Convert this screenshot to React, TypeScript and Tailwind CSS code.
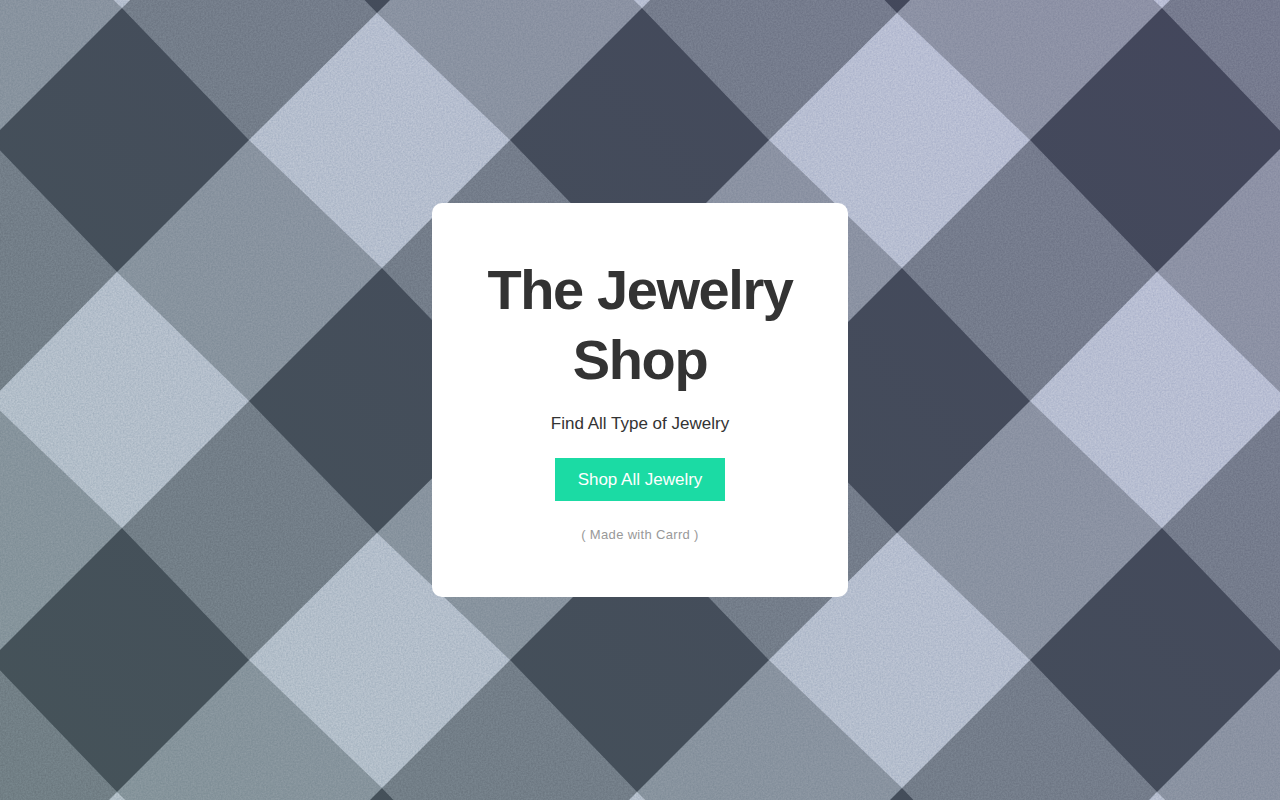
import React from 'react';

type Tone = {
  id: string;
  from: string;
  to: string;
};

// Each tone runs from the bottom left corner to the top right one
const tones: Tone[] = [
  { id: 'mid', from: '#84949a', to: '#8e91a7' },
  { id: 'shade', from: '#717f85', to: '#767a8f' },
  { id: 'dark', from: '#455359', to: '#43465c' },
  { id: 'light', from: '#b0bec6', to: '#babed7' },
];

// Diamonds of one 520px tile, the tile starts at the left tip of a dark one
const shapes: Record<string, string[]> = {
  shade: [
    '132,8 259,140 387,13 259,-120',
    '132,528 259,660 387,533 259,400',
    '0,140 127,272 0,401 -128,268',
    '520,140 647,272 520,401 392,268',
  ],
  dark: [
    '132,8 259,140 127,272 0,140',
    '132,528 259,660 127,792 0,660',
    '392,268 520,401 387,533 259,401',
    '392,-252 520,-119 387,13 259,-119',
  ],
  light: [
    '387,13 520,140 392,268 259,140',
    '127,272 259,401 132,528 0,401',
    '387,533 520,660 392,788 259,660',
    '127,-248 259,-119 132,8 0,-119',
  ],
};

const Background = () => {
  return (
    <svg
      className="absolute inset-0 h-full w-full"
      aria-hidden="true"
      preserveAspectRatio="none"
    >
      <defs>
        {tones.map((tone) => (
          <linearGradient
            key={tone.id}
            id={`tone-${tone.id}`}
            x1="0"
            y1="1"
            x2="1.17"
            y2="0.27"
          >
            <stop offset="0" stopColor={tone.from} />
            <stop offset="1" stopColor={tone.to} />
          </linearGradient>
        ))}
        {Object.entries(shapes).map(([id, points]) => (
          <React.Fragment key={id}>
            <pattern
              id={`tile-${id}`}
              x="-10"
              y="0"
              width="520"
              height="520"
              patternUnits="userSpaceOnUse"
            >
              {points.map((p) => (
                <polygon key={p} points={p} fill="#fff" />
              ))}
            </pattern>
            <mask id={`mask-${id}`}>
              <rect width="100%" height="100%" fill={`url(#tile-${id})`} />
            </mask>
          </React.Fragment>
        ))}
        <filter
          id="grain"
          x="0"
          y="0"
          width="100%"
          height="100%"
          colorInterpolationFilters="sRGB"
        >
          <feTurbulence
            type="fractalNoise"
            baseFrequency="0.6"
            numOctaves="2"
            seed="4"
          />
          <feColorMatrix
            type="matrix"
            values="1 0 0 0 0  1 0 0 0 0  1 0 0 0 0  0 0 0 0 1"
          />
        </filter>
      </defs>

      <rect width="100%" height="100%" fill="url(#tone-mid)" />
      <rect
        width="100%"
        height="100%"
        fill="url(#tone-shade)"
        mask="url(#mask-shade)"
      />
      <rect
        width="100%"
        height="100%"
        fill="url(#tone-light)"
        mask="url(#mask-light)"
      />
      {/* Fabric grain, the dark diamonds stay smooth */}
      <rect
        className="opacity-10 mix-blend-overlay"
        width="100%"
        height="100%"
        filter="url(#grain)"
      />
      <rect
        className="opacity-15 mix-blend-overlay"
        width="100%"
        height="100%"
        filter="url(#grain)"
        mask="url(#mask-light)"
      />
      <rect
        width="100%"
        height="100%"
        fill="url(#tone-dark)"
        mask="url(#mask-dark)"
      />
    </svg>
  );
};

const App = () => {
  return (
    <div className="relative isolate flex min-h-screen items-center justify-center overflow-hidden p-6 font-['Liberation_Sans',Arial,sans-serif]">
      <Background />

      {/* Card */}
      <main className="relative flex w-full max-w-[416px] flex-col items-center rounded-[10px] bg-white px-12 py-[52px] text-center text-[#333333]">
        <h1 className="text-[56px] leading-[70px] font-bold tracking-tight">
          The Jewelry Shop
        </h1>
        <p className="mt-[15px] text-[17px] leading-7">
          Find All Type of Jewelry
        </p>
        <a
          href="#shop"
          className="mt-5 flex h-[43px] w-[170px] items-center justify-center bg-[#1bdba4] text-[17px] text-white"
        >
          Shop All Jewelry
        </a>
        <a
          href="#carrd"
          className="mt-6 text-[13px] leading-5 tracking-wide text-[#999999]"
        >
          ( Made with Carrd )
        </a>
      </main>
    </div>
  );
};

export default App;
